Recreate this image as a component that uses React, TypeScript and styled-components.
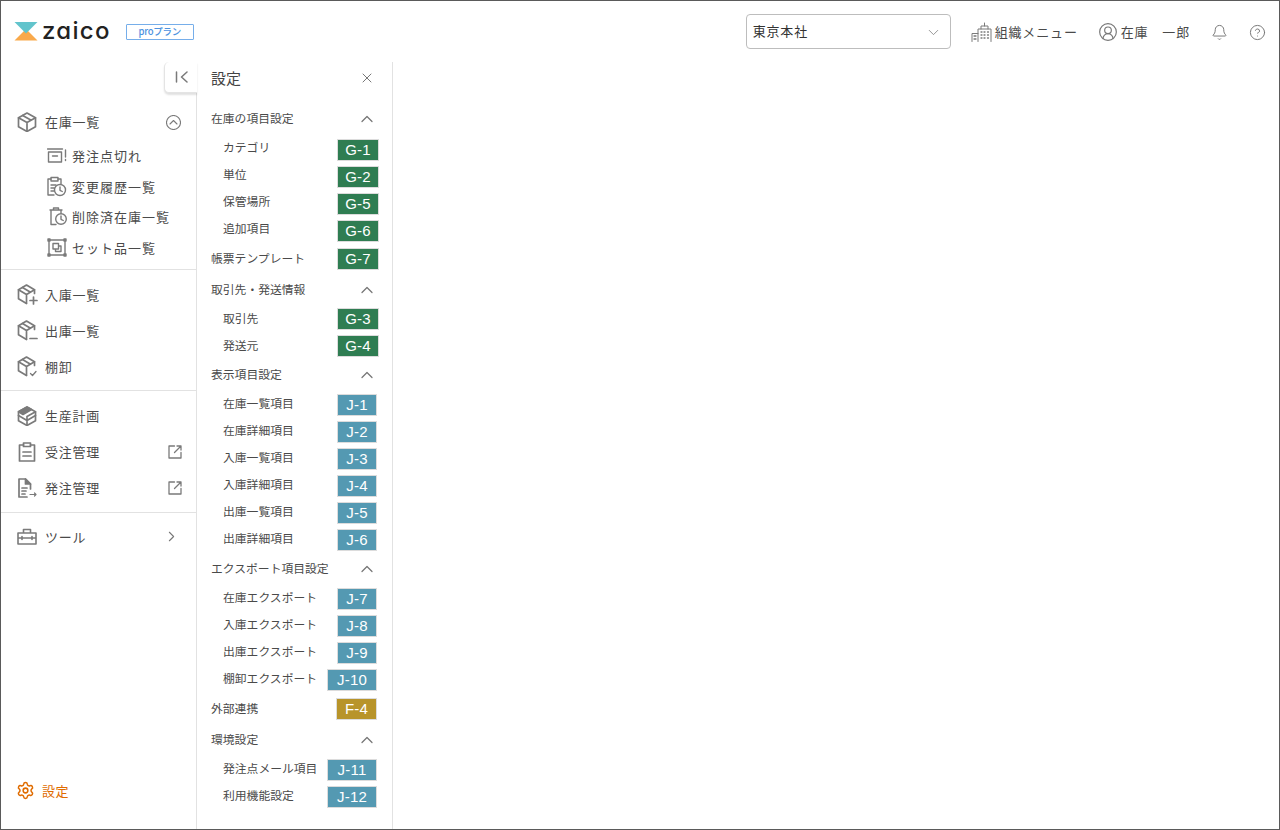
import React from "react";
import styled, { createGlobalStyle } from "styled-components";
import { Bell, ChevronDown, ChevronRight, ChevronUp, CircleHelp, CircleUserRound, Settings, X } from "lucide-react";

const GlobalStyle = createGlobalStyle`
    html, body {
        margin: 0;
        padding: 0;
        background: #fff;
    }
    * {
        box-sizing: border-box;
    }
`;

const FONT = `"Noto Sans CJK JP", "Noto Sans", sans-serif`;

const Frame = styled.div`
    width: 1280px;
    height: 830px;
    border: 1px solid #5a5a5a;
    display: flex;
    flex-direction: column;
    font-family: ${FONT};
    color: #4a4a4a;
    overflow: hidden;
    background: #fff;
`;

/* header */
const Header = styled.header`
    height: 61px;
    flex: none;
    display: flex;
    align-items: center;
    padding: 0 13px;
`;

const Logo = styled.div`
    display: flex;
    align-items: center;
    gap: 4px;
`;

const LogoWord = styled.span`
    font-family: Inter, "Liberation Sans", sans-serif;
    font-feature-settings: "cv11";
    font-size: 24px;
    line-height: 24px;
    font-weight: 500;
    letter-spacing: 1.3px;
    color: #222;
    padding-bottom: 2px;
`;

const PlanTag = styled.span`
    margin-left: 11px;
    width: 68px;
    height: 16px;
    border: 1.5px solid #76aeea;
    border-radius: 1px;
    color: #4e93e0;
    font-size: 9.5px;
    font-weight: 500;
    letter-spacing: -0.3px;
    line-height: 13px;
    text-align: center;
`;

const HeaderRight = styled.div`
    margin-left: auto;
    display: flex;
    align-items: center;
`;

const Select = styled.div`
    width: 205px;
    height: 35px;
    border: 1px solid #bdbdbd;
    border-radius: 4px;
    display: flex;
    align-items: center;
    justify-content: space-between;
    padding: 0 8px 2px 6px;
    font-size: 13px;
    letter-spacing: 0.85px;
    color: #333;
    margin-right: 20px;
    svg {
        margin-top: 4px;
    }
`;

const HeaderItem = styled.div<{ $gap: number; $mr: number }>`
    display: flex;
    align-items: center;
    gap: ${(p) => p.$gap}px;
    font-size: 13px;
    letter-spacing: 0.85px;
    margin-right: ${(p) => p.$mr}px;
    color: #4a4a4a;
    svg {
        color: #777;
        flex: none;
    }
`;

const HeaderIcon = styled.span<{ $mr: number }>`
    display: flex;
    margin: 2px ${(p) => p.$mr}px 0 0;
    color: #777;
`;

/* body */
const Body = styled.div`
    flex: 1;
    display: flex;
    min-height: 0;
`;

const Sidebar = styled.nav`
    position: relative;
    width: 196px;
    flex: none;
    border-right: 1px solid #e2e2e2;
    display: flex;
    flex-direction: column;
    padding-top: 42px;
`;

const CollapseTab = styled.div`
    position: absolute;
    top: 0;
    right: -1px;
    width: 33px;
    height: 31px;
    background: #fff;
    border: 1px solid #e4e4e4;
    border-right: none;
    border-top: none;
    border-radius: 5px 0 0 5px;
    box-shadow: 0 2px 2px rgba(0, 0, 0, 0.12);
    display: flex;
    align-items: center;
    justify-content: center;
    padding-left: 2px;
    z-index: 2;
    color: #777;
`;

const NavGroup = styled.div<{ $pt: number; $pb: number; $last?: boolean }>`
    padding: ${(p) => p.$pt}px 0 ${(p) => p.$pb}px;
    border-bottom: ${(p) => (p.$last ? "none" : "1px solid #e2e2e2")};
`;

const NavRow = styled.div`
    height: 36px;
    display: flex;
    align-items: center;
    padding: 0 14px 0 16px;
    font-size: 13px;
    letter-spacing: 0.75px;
    color: #4a4a4a;
    svg {
        flex: none;
    }
`;

const NavIcon = styled.span`
    width: 21px;
    flex: none;
    display: flex;
    align-items: center;
`;

const NavLabel = styled.span`
    margin-left: 7px;
    flex: 1;
    padding-bottom: 1px;
`;

const NavAside = styled.span<{ $mr: number }>`
    display: flex;
    margin-right: ${(p) => p.$mr}px;
`;

const SubRow = styled.div`
    height: 30.7px;
    display: flex;
    align-items: center;
    padding-left: 45px;
    font-size: 13px;
    letter-spacing: 1px;
    color: #4a4a4a;
`;

const SubIcon = styled.span`
    width: 21px;
    flex: none;
    display: flex;
    justify-content: flex-end;
`;

const SubLabel = styled.span`
    margin-left: 5px;
`;

const NavFoot = styled.div`
    margin-top: auto;
    height: 36px;
    margin-bottom: 21px;
    display: flex;
    align-items: center;
    gap: 7px;
    padding-left: 15px;
    font-size: 13px;
    letter-spacing: 0.5px;
    color: #e06c00;
`;

const Panel = styled.aside`
    width: 196px;
    flex: none;
    border-right: 1px solid #e2e2e2;
    padding-left: 14px;
    display: flex;
    flex-direction: column;
`;

const PanelTitle = styled.div`
    height: 34px;
    margin-bottom: 7px;
    display: flex;
    align-items: center;
    justify-content: space-between;
    padding: 0 17px 3px 0;
    font-size: 15px;
    color: #444;
    svg {
        color: #777;
    }
`;

const SectionHead = styled.div<{ $mt: number; $mb: number }>`
    height: 30px;
    margin-top: ${(p) => p.$mt}px;
    margin-bottom: ${(p) => p.$mb}px;
    display: flex;
    align-items: center;
    justify-content: space-between;
    padding: 0 15px 2px 0;
    font-size: 11.8px;
    color: #4a4a4a;
    svg {
        color: #777;
        margin-top: 4px;
    }
`;

const SettingRow = styled.div<{ $sub?: boolean; $mt?: number }>`
    height: 27px;
    margin-top: ${(p) => p.$mt ?? 0}px;
    display: flex;
    align-items: center;
    justify-content: space-between;
    padding-left: ${(p) => (p.$sub ? 12 : 0)}px;
    font-size: 11.8px;
    color: #4a4a4a;
`;

const RowLabel = styled.span<{ $lift: number }>`
    margin-bottom: ${(p) => p.$lift}px;
    white-space: nowrap;
`;

const TONES = {
    G: { bg: "#2f7d52", mr: 13, width: 42 },
    J: { bg: "#5499b2", mr: 15, width: 40 },
    F: { bg: "#b8942a", mr: 15, width: 41 },
};

const Badge = styled.span<{ $tone: "G" | "J" | "F"; $wide?: boolean }>`
    height: 22px;
    width: ${(p) => (p.$wide ? 50 : TONES[p.$tone].width)}px;
    flex: none;
    margin-right: ${(p) => TONES[p.$tone].mr}px;
    margin-bottom: 1px;
    background: ${(p) => TONES[p.$tone].bg};
    border: 1px solid #dcdcdc;
    color: #fff;
    font-family: "Liberation Sans", Arial, sans-serif;
    font-size: 15px;
    line-height: 20px;
    letter-spacing: 0.2px;
    text-align: center;
`;

const Content = styled.main`
    flex: 1;
`;

/* drawn icons */
const Svg = styled.svg.attrs({ fill: "none", stroke: "#7a7a7a", strokeLinejoin: "round", strokeLinecap: "round" })``;

function LogoMark() {
    return (
        <svg width="24" height="19" viewBox="0 0 24 19">
            <polygon points="0.5,18.5 12,7 23.5,18.5" fill="#f9a94b" />
            <polygon points="0.5,0 23.5,0 12,11.5" fill="#62c4cc" />
        </svg>
    );
}

function Building() {
    return (
        <Svg width="21" height="20" viewBox="0 0 21 20" strokeWidth="1">
            <path d="M1 19.500v-8h6M7 19.500V7h13v12.500" />
            <path d="M10 7V4h7v3M13.500 4V1" />
            <path d="M3 14h2M3 17h2M10 10h1M13 10h1M16.500 10h1M10 13h1M13 13h1M16.500 13h1M10 16h1M13 16h1M16.500 16h1" strokeWidth="1.300" />
        </Svg>
    );
}

function Box() {
    return (
        <Svg width="20" height="20" viewBox="0 0 20 20" strokeWidth="1.700">
            <path d="M10 1l8.500 4.800v8.900L10 19.500l-8.500-4.800V5.800z" />
            <path d="M1.500 5.800L10 10.500l8.500-4.700M10 10.500v9M5.700 3.400l8.500 4.800" />
        </Svg>
    );
}

function BoxMark({ mark }: { mark: "plus" | "minus" | "check" }) {
    return (
        <Svg width="21" height="21" viewBox="0 0 21 21" strokeWidth="1.700">
            <path d="M17.500 9.500V5.800L9.500 1 1.500 5.800v8.900l8 4.800" />
            <path d="M1.500 5.800l8 4.700 8-4.700M9.500 10.500v8.500M5.500 3.400l8 4.800" />
            {mark === "plus" && <path d="M16.500 13v7M13 16.500h7" />}
            {mark === "minus" && <path d="M13 18.500h7" />}
            {mark === "check" && <path d="M13.500 17.500l2 2 3.500-4" strokeWidth="1.300" />}
        </Svg>
    );
}

function SolidBox() {
    return (
        <Svg width="20" height="20" viewBox="0 0 20 20" strokeWidth="1.700">
            <path d="M10 1l8.500 4.800v8.900L10 19.500l-8.500-4.800V5.800z" />
            <path d="M1.500 5.800L10 1l4.500 2.500-8.500 5z" fill="#7a7a7a" />
            <path d="M10 10.500v9M1.500 9.500l8.500 5 8.500-5M10 10.500l8.500-4.700" />
        </Svg>
    );
}

function Clipboard() {
    return (
        <Svg width="20" height="20" viewBox="0 0 20 20" strokeWidth="1.700">
            <path d="M6.500 3H2.500v16h15V3h-4" />
            <path d="M6.500 1h7v3.500h-7z" />
            <path d="M6 10h8M6 14h8" />
        </Svg>
    );
}

function OrderDoc() {
    return (
        <Svg width="21" height="20" viewBox="0 0 21 20" strokeWidth="1.700">
            <path d="M13.500 11V6l-5-5H2v18h8" />
            <path d="M8.500 1v5h5z" fill="#7a7a7a" />
            <path d="M5 10h5M5 13h4M5 16h3" />
            <path d="M13 16.500h6M17.500 15l1.500 1.500-1.500 1.500" strokeWidth="1.200" />
        </Svg>
    );
}

function Toolbox() {
    return (
        <Svg width="20" height="17" viewBox="0 0 20 17" strokeWidth="1.600">
            <path d="M1 5h18v11H1zM6.500 5V1.500h7V5M1 10h18" />
            <path d="M5 8.500v3M15 8.500v3" />
        </Svg>
    );
}

function External() {
    return (
        <Svg width="14" height="14" viewBox="0 0 14 14" strokeWidth="1.300">
            <path d="M6.500 1H1v12h12V7.500" />
            <path d="M6.500 7.500L13 1M9 1h4v4" />
        </Svg>
    );
}

function Collapse() {
    return (
        <Svg width="14" height="12" viewBox="0 0 14 12" strokeWidth="1.500">
            <path d="M1.500 1v10M12 1L6.500 6l5.500 5" />
        </Svg>
    );
}

function CircleUp() {
    return (
        <Svg width="15" height="15" viewBox="0 0 15 15" strokeWidth="1.100">
            <circle cx="7.500" cy="7.500" r="7" />
            <path d="M4 9l3.500-3.500L11 9" />
        </Svg>
    );
}

function OutOfStock() {
    return (
        <Svg width="20" height="15" viewBox="0 0 20 15" strokeWidth="1.400">
            <path d="M0.500 1h15M1.500 4h13v10h-13zM5.500 8h5" />
            <path d="M18.500 2v7M18.500 11.500v1" />
        </Svg>
    );
}

function History() {
    return (
        <Svg width="21" height="21" viewBox="0 0 21 21" strokeWidth="1.400">
            <path d="M8 19H2V3h3M12 3h3v5" />
            <path d="M5 1.500h7v3.500H5zM5 9h5M5 12h3M5 15h3" />
            <circle cx="14" cy="14" r="5.500" />
            <path d="M14 11v3.300l2.300 1.200" />
        </Svg>
    );
}

function Deleted() {
    return (
        <Svg width="18" height="19" viewBox="0 0 18 19" strokeWidth="1.400">
            <path d="M1 3h12M4.500 3V1h5v2M2 3v14.500h5M12 3v3" />
            <circle cx="12" cy="12" r="5.300" />
            <path d="M12 9v3.300l2.300 1.200" />
        </Svg>
    );
}

function SetItem() {
    return (
        <Svg width="20" height="19" viewBox="0 0 20 19" strokeWidth="1.400">
            <path d="M2 2h16v15H2z" />
            <path d="M1 1h2v2H1zM17 1h2v2h-2zM1 16h2v2H1zM17 16h2v2h-2z" fill="#7a7a7a" />
            <path d="M6 5.500h5.500v5.500H6zM8.500 11v2.500h5.500V8h-2.500" />
        </Svg>
    );
}

type Row = { label: string; code: string };
type Section = { title: string; pad: number; mt: number; lift: number; rows: Row[] };
type Plain = { label: string; code: string; mt: number };

const stockSection: Section = {
    title: "在庫の項目設定", pad: 4, mt: 0, lift: 8,
    rows: [
        { label: "カテゴリ", code: "G-1" },
        { label: "単位", code: "G-2" },
        { label: "保管場所", code: "G-5" },
        { label: "追加項目", code: "G-6" },
    ],
};

const partnerSection: Section = {
    title: "取引先・発送情報", pad: 2, mt: 1, lift: 4,
    rows: [
        { label: "取引先", code: "G-3" },
        { label: "発送元", code: "G-4" },
    ],
};

const otherSections: Section[] = [
    {
        title: "表示項目設定", pad: 3, mt: -1, lift: 6,
        rows: [
            { label: "在庫一覧項目", code: "J-1" },
            { label: "在庫詳細項目", code: "J-2" },
            { label: "入庫一覧項目", code: "J-3" },
            { label: "入庫詳細項目", code: "J-4" },
            { label: "出庫一覧項目", code: "J-5" },
            { label: "出庫詳細項目", code: "J-6" },
        ],
    },
    {
        title: "エクスポート項目設定", pad: 3, mt: -1, lift: 6,
        rows: [
            { label: "在庫エクスポート", code: "J-7" },
            { label: "入庫エクスポート", code: "J-8" },
            { label: "出庫エクスポート", code: "J-9" },
            { label: "棚卸エクスポート", code: "J-10" },
        ],
    },
];

const envSection: Section = {
    title: "環境設定", pad: 3, mt: 1, lift: 6,
    rows: [
        { label: "発注点メール項目", code: "J-11" },
        { label: "利用機能設定", code: "J-12" },
    ],
};

const template: Plain = { label: "帳票テンプレート", code: "G-7", mt: 1 };
const linkage: Plain = { label: "外部連携", code: "F-4", mt: 2 };

function CodeBadge({ code }: { code: string }) {
    const tone = code[0] as "G" | "J" | "F";
    return <Badge $tone={tone} $wide={code.length > 3}>{code}</Badge>;
}

function SectionBlock({ section }: { section: Section }) {
    return (
        <>
            <SectionHead $mt={section.mt} $mb={section.pad}>
                {section.title}
                <ChevronUp size={20} strokeWidth={1.5} />
            </SectionHead>
            {section.rows.map((row) => (
                <SettingRow $sub key={row.code}>
                    <RowLabel $lift={section.lift}>{row.label}</RowLabel>
                    <CodeBadge code={row.code} />
                </SettingRow>
            ))}
        </>
    );
}

function PlainRow({ row }: { row: Plain }) {
    return (
        <SettingRow $mt={row.mt}>
            <RowLabel $lift={4}>{row.label}</RowLabel>
            <CodeBadge code={row.code} />
        </SettingRow>
    );
}

export default function App() {
    return (
        <Frame>
            <GlobalStyle />
            <Header>
                <Logo>
                    <LogoMark />
                    <LogoWord>zaico</LogoWord>
                    <PlanTag>proプラン</PlanTag>
                </Logo>
                <HeaderRight>
                    <Select>
                        東京本社
                        <ChevronDown size={17} strokeWidth={1.25} color="#888" />
                    </Select>
                    <HeaderItem $gap={3} $mr={20}>
                        <Building />
                        組織メニュー
                    </HeaderItem>
                    <HeaderItem $gap={3} $mr={21}>
                        <CircleUserRound size={20} strokeWidth={1.4} />
                        在庫　一郎
                    </HeaderItem>
                    <HeaderIcon $mr={21}>
                        <Bell size={17} strokeWidth={1.4} />
                    </HeaderIcon>
                    <HeaderIcon $mr={0}>
                        <CircleHelp size={17} strokeWidth={1.4} />
                    </HeaderIcon>
                </HeaderRight>
            </Header>
            <Body>
                <Sidebar>
                    <CollapseTab>
                        <Collapse />
                    </CollapseTab>
                    <NavGroup $pt={0} $pb={6}>
                        <NavRow>
                            <NavIcon><Box /></NavIcon>
                            <NavLabel>在庫一覧</NavLabel>
                            <NavAside $mr={1}><CircleUp /></NavAside>
                        </NavRow>
                        <SubRow><SubIcon><OutOfStock /></SubIcon><SubLabel>発注点切れ</SubLabel></SubRow>
                        <SubRow><SubIcon><History /></SubIcon><SubLabel>変更履歴一覧</SubLabel></SubRow>
                        <SubRow><SubIcon><Deleted /></SubIcon><SubLabel>削除済在庫一覧</SubLabel></SubRow>
                        <SubRow><SubIcon><SetItem /></SubIcon><SubLabel>セット品一覧</SubLabel></SubRow>
                    </NavGroup>
                    <NavGroup $pt={7} $pb={5}>
                        <NavRow><NavIcon><BoxMark mark="plus" /></NavIcon><NavLabel>入庫一覧</NavLabel></NavRow>
                        <NavRow><NavIcon><BoxMark mark="minus" /></NavIcon><NavLabel>出庫一覧</NavLabel></NavRow>
                        <NavRow><NavIcon><BoxMark mark="check" /></NavIcon><NavLabel>棚卸</NavLabel></NavRow>
                    </NavGroup>
                    <NavGroup $pt={7} $pb={6}>
                        <NavRow><NavIcon><SolidBox /></NavIcon><NavLabel>生産計画</NavLabel></NavRow>
                        <NavRow><NavIcon><Clipboard /></NavIcon><NavLabel>受注管理</NavLabel><External /></NavRow>
                        <NavRow><NavIcon><OrderDoc /></NavIcon><NavLabel>発注管理</NavLabel><External /></NavRow>
                    </NavGroup>
                    <NavGroup $pt={6} $pb={0} $last>
                        <NavRow>
                            <NavIcon><Toolbox /></NavIcon>
                            <NavLabel>ツール</NavLabel>
                            <NavAside $mr={2}><ChevronRight size={17} strokeWidth={1.5} color="#777" /></NavAside>
                        </NavRow>
                    </NavGroup>
                    <NavFoot>
                        <Settings size={19} strokeWidth={1.9} />
                        設定
                    </NavFoot>
                </Sidebar>
                <Panel>
                    <PanelTitle>
                        設定
                        <X size={16} strokeWidth={1.5} />
                    </PanelTitle>
                    <SectionBlock section={stockSection} />
                    <PlainRow row={template} />
                    <SectionBlock section={partnerSection} />
                    {otherSections.map((section) => (
                        <SectionBlock section={section} key={section.title} />
                    ))}
                    <PlainRow row={linkage} />
                    <SectionBlock section={envSection} />
                </Panel>
                <Content />
            </Body>
        </Frame>
    );
}
